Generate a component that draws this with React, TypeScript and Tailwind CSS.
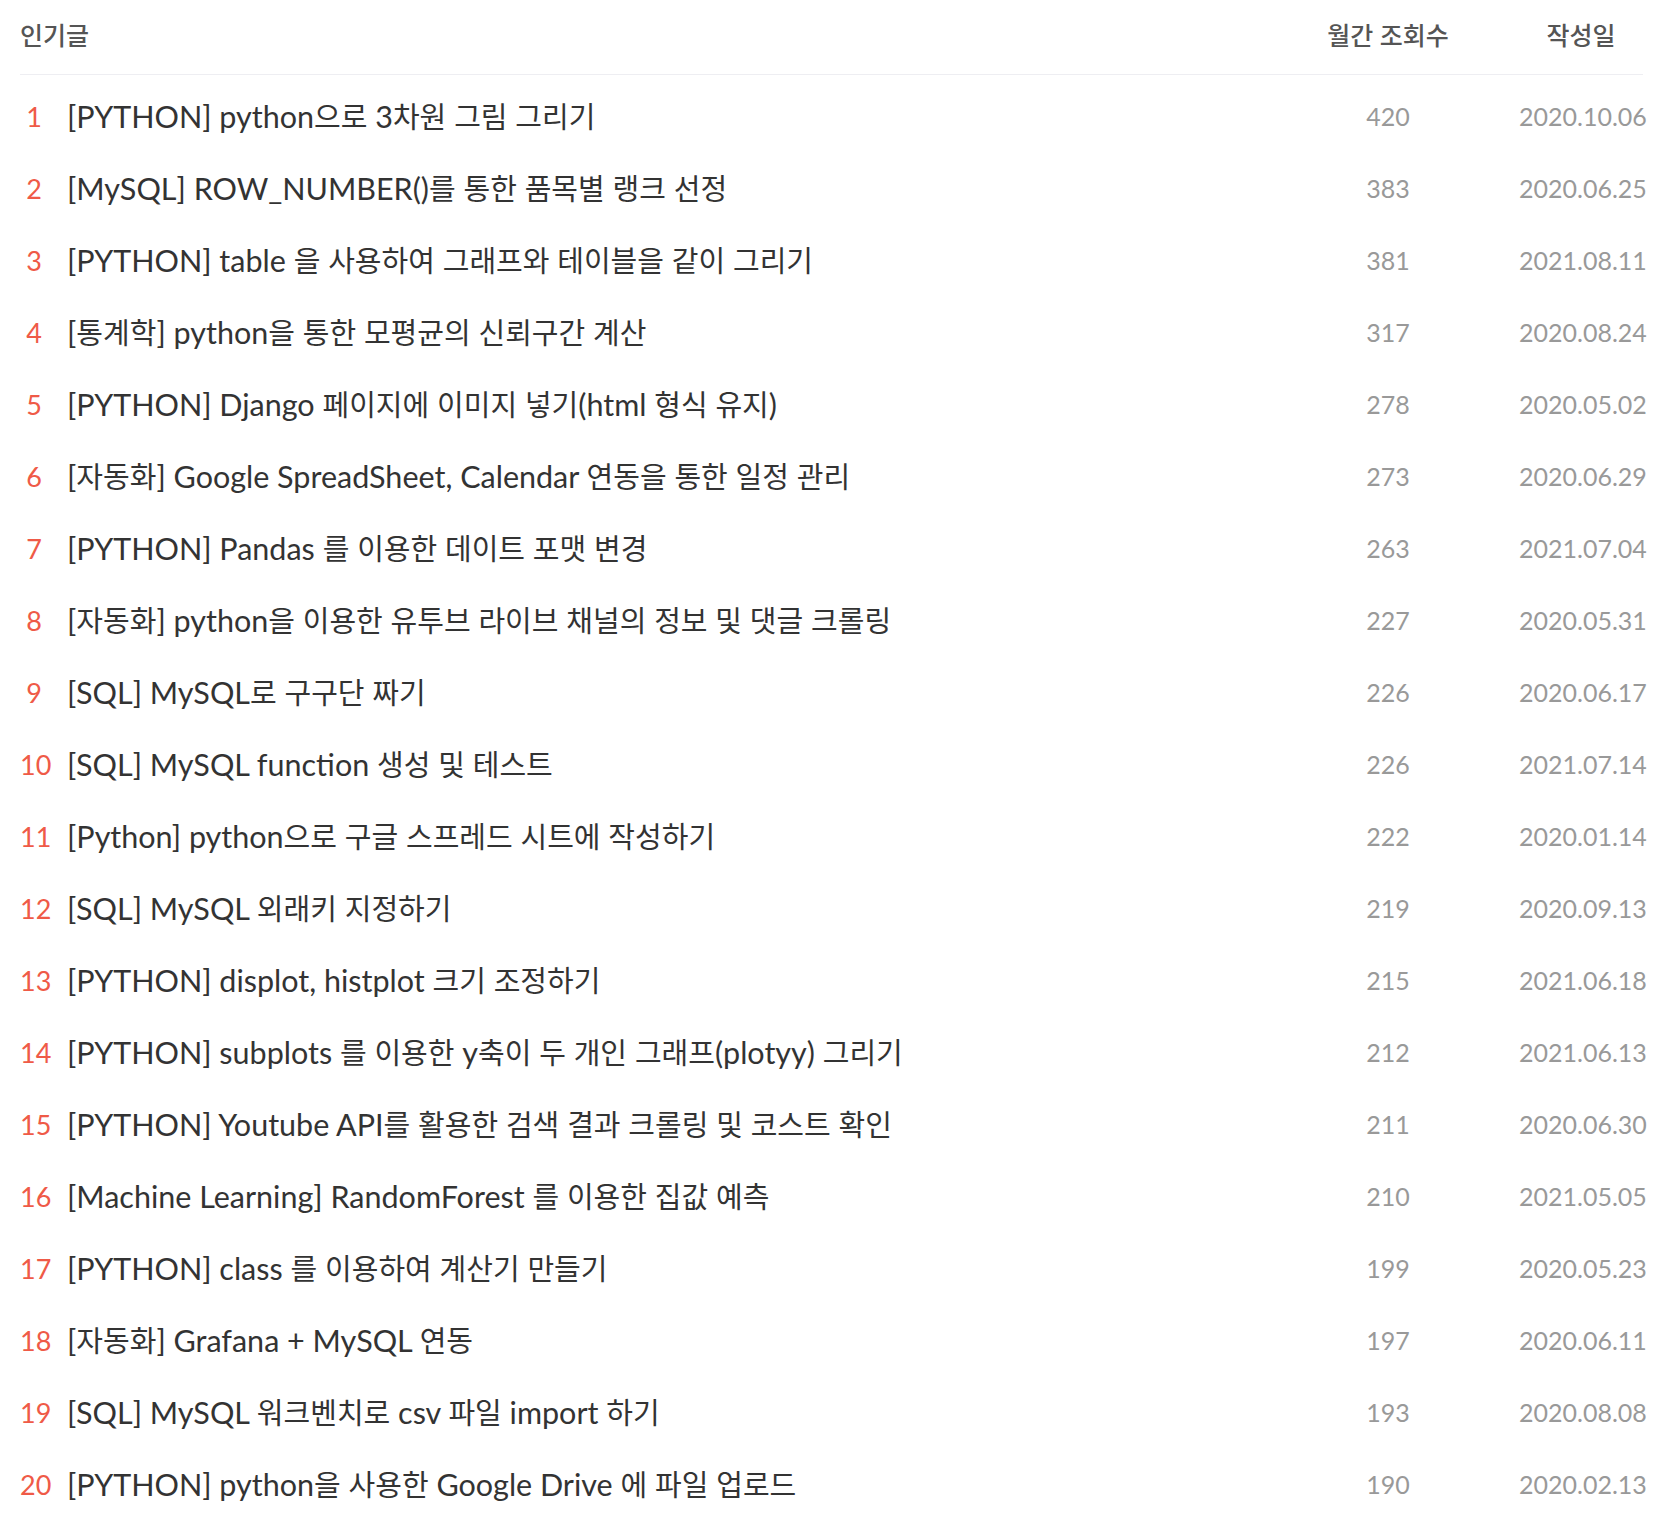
const posts = [
  { title: "[PYTHON] python으로 3차원 그림 그리기", views: 420, date: "2020.10.06" },
  { title: "[MySQL] ROW_NUMBER()를 통한 품목별 랭크 선정", views: 383, date: "2020.06.25" },
  { title: "[PYTHON] table 을 사용하여 그래프와 테이블을 같이 그리기", views: 381, date: "2021.08.11" },
  { title: "[통계학] python을 통한 모평균의 신뢰구간 계산", views: 317, date: "2020.08.24" },
  { title: "[PYTHON] Django 페이지에 이미지 넣기(html 형식 유지)", views: 278, date: "2020.05.02" },
  { title: "[자동화] Google SpreadSheet, Calendar 연동을 통한 일정 관리", views: 273, date: "2020.06.29" },
  { title: "[PYTHON] Pandas 를 이용한 데이트 포맷 변경", views: 263, date: "2021.07.04" },
  { title: "[자동화] python을 이용한 유투브 라이브 채널의 정보 및 댓글 크롤링", views: 227, date: "2020.05.31" },
  { title: "[SQL] MySQL로 구구단 짜기", views: 226, date: "2020.06.17" },
  { title: "[SQL] MySQL function 생성 및 테스트", views: 226, date: "2021.07.14" },
  { title: "[Python] python으로 구글 스프레드 시트에 작성하기", views: 222, date: "2020.01.14" },
  { title: "[SQL] MySQL 외래키 지정하기", views: 219, date: "2020.09.13" },
  { title: "[PYTHON] displot, histplot 크기 조정하기", views: 215, date: "2021.06.18" },
  { title: "[PYTHON] subplots 를 이용한 y축이 두 개인 그래프(plotyy) 그리기", views: 212, date: "2021.06.13" },
  { title: "[PYTHON] Youtube API를 활용한 검색 결과 크롤링 및 코스트 확인", views: 211, date: "2020.06.30" },
  { title: "[Machine Learning] RandomForest 를 이용한 집값 예측", views: 210, date: "2021.05.05" },
  { title: "[PYTHON] class 를 이용하여 계산기 만들기", views: 199, date: "2020.05.23" },
  { title: "[자동화] Grafana + MySQL 연동", views: 197, date: "2020.06.11" },
  { title: "[SQL] MySQL 워크벤치로 csv 파일 import 하기", views: 193, date: "2020.08.08" },
  { title: "[PYTHON] python을 사용한 Google Drive 에 파일 업로드", views: 190, date: "2020.02.13" },
];

// hangul runs are set a touch smaller than the latin ones, like the blog skin
function Title({ text }: { text: string }) {
  const parts = text.split(/([가-힣]+)/);
  return (
    <>
      {parts.map((part, i) =>
        /[가-힣]/.test(part) ? (
          <span key={i} className="text-[29px]">{part}</span>
        ) : (
          <span key={i} className="text-[30.5px]">{part}</span>
        )
      )}
    </>
  );
}

export default function App() {
  return (
    <div
      className="min-h-screen bg-white pl-[20px] pr-[23px]"
      style={{ fontFamily: "Lato, 'Noto Sans CJK KR', sans-serif" }}
    >
      <div className="flex h-[75px] items-center border-b border-[#eeeef2] pb-[3px] text-[25px] font-medium text-[#555]">
        <div className="flex-1">인기글</div>
        <div className="w-[140px] text-center">월간 조회수</div>
        <div className="ml-[61px] w-[124px] text-center">작성일</div>
      </div>

      <ol className="pt-[6px]">
        {posts.map((p, i) => (
          <li key={i} className="flex h-[72px] items-center">
            <span className="w-[28px] shrink-0 text-center text-[27px] text-[#ef5a47]">{i + 1}</span>
            <span className="ml-[19px] flex-1 truncate text-[29px] text-[#333]">
              <Title text={p.title} />
            </span>
            <span className="w-[140px] shrink-0 text-center text-[25px] text-[#999]">{p.views}</span>
            <span className="ml-[61px] w-[124px] shrink-0 whitespace-nowrap text-center text-[25px] text-[#999]">
              {p.date}
            </span>
          </li>
        ))}
      </ol>
    </div>
  );
}
